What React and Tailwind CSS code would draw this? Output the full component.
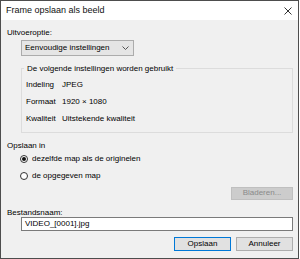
import React from 'react';

const font = { fontFamily: '"Liberation Sans", Arial, sans-serif' };

// Small radio button, Windows style
const Radio = ({ checked, label }) => (
    <div className="flex items-center h-[17px]">
        <span className="ml-[13px] w-[8px] h-[8px] rounded-full border border-[#333] bg-white flex items-center justify-center">
            {checked && <span className="w-[4px] h-[4px] rounded-full bg-[#111]" />}
        </span>
        <span className="ml-[4px]">{label}</span>
    </div>
);

const App = () => {
    const rows = [
        ['Indeling', 'JPEG'],
        ['Formaat', '1920 × 1080'],
        ['Kwaliteit', 'Uitstekende kwaliteit'],
    ];

    return (
        <div className="w-[300px] h-[259px] bg-white text-[8px] text-black" style={font}>
            <div className="w-[299px] h-[259px] border border-[#4d4d4d] flex flex-col">
                {/* Title bar */}
                <div className="h-[19px] bg-white flex items-center justify-between pl-[5px] pr-[6px]">
                    <span className="text-[9px] text-[#111]">Frame opslaan als beeld</span>
                    <svg width="8" height="8" viewBox="0 0 8 8">
                        <path d="M0.5 0.5L7.5 7.5M7.5 0.5L0.5 7.5" stroke="#333" strokeWidth="1" />
                    </svg>
                </div>

                {/* Body */}
                <div className="flex-1 bg-[#f0f0f0] pl-[6px] pr-[5px] pt-[7px] flex flex-col">
                    <div className="leading-[11px]">Uitvoeroptie:</div>
                    <div className="mt-[2px] ml-[14px] w-[113px] h-[16px] bg-[#e5e5e5] border border-[#acacac] flex items-center justify-between pl-[3px] pr-[4px]">
                        <span>Eenvoudige instellingen</span>
                        <svg width="7" height="4" viewBox="0 0 7 4">
                            <path d="M0.5 0.5L3.5 3.5L6.5 0.5" stroke="#555" strokeWidth="1" fill="none" />
                        </svg>
                    </div>

                    <fieldset className="mt-[7px] ml-[14px] border border-[#dcdcdc] pl-[4px] pb-[4px]">
                        <legend className="ml-[-2px] px-[3px] leading-[11px]">De volgende instellingen worden gebruikt</legend>
                        <div className="pt-[2.5px]">
                            {rows.map(([k, v]) => (
                                <div key={k} className="flex h-[17px] items-center">
                                    <span className="w-[36px]">{k}</span>
                                    <span>{v}</span>
                                </div>
                            ))}
                        </div>
                    </fieldset>

                    <div className="mt-[7px] leading-[11px]">Opslaan in</div>
                    <Radio checked label="dezelfde map als de originelen" />
                    <Radio label="de opgegeven map" />

                    <div className="mt-[2px] self-end w-[62px] h-[13px] bg-[#cccccc] border border-[#bfbfbf] text-[#8a8a8a] flex items-center justify-center">
                        Bladeren...
                    </div>

                    <div className="mt-[8px] leading-[9px]">Bestandsnaam:</div>
                    <div className="ml-[14px] h-[14px] bg-white border border-[#7a7a7a] flex items-center pl-[3px]">
                        VIDEO_[0001].jpg
                    </div>

                    <div className="mt-[6px] flex justify-end gap-[5px]">
                        <button className="w-[57px] h-[14px] bg-[#e1e1e1] border border-[#0078d7] flex items-center justify-center">
                            Opslaan
                        </button>
                        <button className="w-[57px] h-[14px] bg-[#e1e1e1] border border-[#adadad] flex items-center justify-center">
                            Annuleer
                        </button>
                    </div>
                </div>
            </div>
        </div>
    );
};

export default App;
